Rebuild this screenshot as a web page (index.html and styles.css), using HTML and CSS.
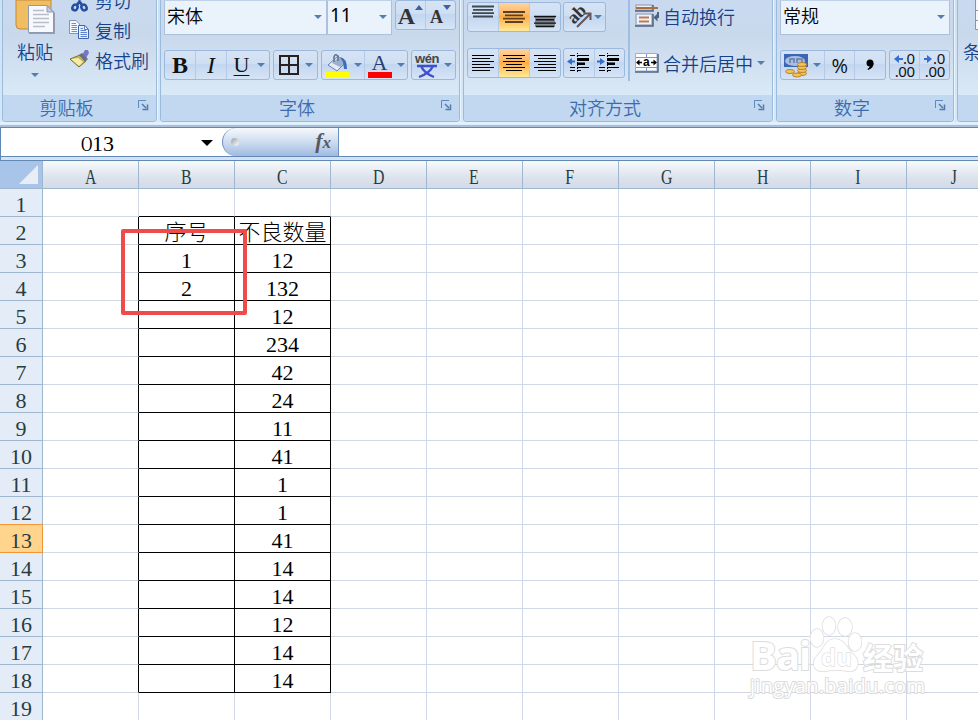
FILE: index.html
```
<!DOCTYPE html>
<html lang="zh-CN">
<head>
    <meta charset="UTF-8">
    <title>Excel</title>
    <link rel="stylesheet" href="styles.css">
</head>
<body>

<div class="ribbon">
    <div class="group clipboard">
        <div class="group-body">
            <div class="paste">
                <svg class="paste-icon" width="42" height="36" viewBox="0 0 42 36">
                    <path d="M0 0H35V25Q35 29 31 29H4Q0 29 0 25Z" fill="#f1bd61" stroke="#c38a3b"/>
                    <path d="M13 6H32L39 13V34H13Z" fill="#969dad"/>
                    <path d="M12.500 5.500H31L37.500 12V32.500H12.500Z" fill="#f7f9fe" stroke="#8e9ab0"/>
                    <path d="M31 5.500V12H37.500Z" fill="#c6cedd" stroke="#8e9ab0"/>
                    <path d="M17 10.500H28M17 14.500H33M17 18.500H33M17 22.500H33M17 26.500H29" stroke="#b9bfc9" stroke-width="1.500"/>
                </svg>
                <span>粘贴</span>
                <i class="arrow"></i>
            </div>
            <div class="commands">
                <div class="command">
                    <svg width="22" height="24" viewBox="0 0 22 24">
                        <path d="M7 8L13 16M14 8L8 16" stroke="#6c85b8" stroke-width="2"/>
                        <g fill="none" stroke="#234f9f" stroke-width="2.500"><ellipse cx="6" cy="19.500" rx="2.500" ry="3" transform="rotate(25 6 19.500)"/><ellipse cx="15" cy="19.500" rx="2.500" ry="3" transform="rotate(-25 15 19.500)"/><path d="M8 17L10.500 14L13 17"/></g>
                    </svg>剪切
                </div>
                <div class="command">
                    <svg width="22" height="24" viewBox="0 0 22 24">
                        <path d="M.5 2.500H7L10.500 6V15.500H.5Z" fill="#f4f8ff" stroke="#8095bb"/>
                        <path d="M2.500 5.500H7M2.500 7.500H8M2.500 9.500H8M2.500 11.500H8M2.500 13.500H8" stroke="#6f8fcc"/>
                        <path d="M9.500 7.500H16L19.500 11.500V20.500H9.500Z" fill="#e6efff" stroke="#4164ac"/>
                        <path d="M15.500 7.500V11.500H19.500M11.500 10.500H14M11.500 12.500H17M11.500 14.500H18M11.500 16.500H18M11.500 18.500H18" stroke="#5f83cf" fill="none"/>
                    </svg>复制
                </div>
                <div class="command">
                    <svg width="22" height="24" viewBox="0 0 22 24">
                        <path d="M13 7L16 2L19 2L20 5L17 10Z" fill="#7b74cf"/>
                        <path d="M1 11L11 7L17 13L10 19Z" fill="#c5b553" stroke="#77733a"/>
                        <path d="M2 11L9 10L14 14L10 18Z" fill="#f4edaa"/>
                        <path d="M10 7L13 5L19 11L16 14Z" fill="#68717e"/>
                    </svg>格式刷
                </div>
            </div>
        </div>
        <div class="group-title">剪贴板<svg class="launcher" width="11" height="11"><path d="M.5 8V.5H8" fill="none" stroke="#5d89bd"/><path d="M4 4L8 8M9.500 4.500V9.500H4.500" fill="none" stroke="#5479a8" stroke-width="1.500"/></svg></div>
    </div>

    <div class="group font">
        <div class="group-body">
            <div class="row top">
                <div class="combo name">宋体<i class="arrow"></i></div>
                <div class="combo size">11<i class="arrow"></i></div>
                <div class="buttons grow-shrink">
                    <span class="button"><b class="big-a">A</b><svg width="8" height="5"><path d="M0 5L4 0L8 5Z" fill="#3f629f"/></svg></span>
                    <span class="button"><b class="small-a">A</b><svg width="8" height="5"><path d="M0 0H8L4 5Z" fill="#3f629f"/></svg></span>
                </div>
            </div>
            <div class="row bottom">
                <div class="buttons bui">
                    <span class="button"><b>B</b></span>
                    <span class="button"><em>I</em></span>
                    <span class="button"><u>U</u><i class="arrow"></i></span>
                </div>
                <div class="buttons border-pick">
                    <span class="button"><svg width="22" height="22"><path d="M2 2H20V20H2ZM11 2V20M2 11H20" fill="none" stroke="#2b2020" stroke-width="2"/></svg><i class="arrow"></i></span>
                </div>
                <div class="buttons colors">
                    <span class="button"><svg width="24" height="26" viewBox="0 0 24 26">
                        <path d="M3 13L13 4L20 11L12 19Z" fill="#e3eaf6" stroke="#6a82a8"/>
                        <path d="M7 11L15 15L20 11L14 5Z" fill="#9ab0d0"/>
                        <path d="M9 10V5Q10 1 13 4V9" fill="none" stroke="#5e6f8d" stroke-width="1.500"/>
                        <path d="M15 5Q22 6 22 17L19 17L18 10Z" fill="#3e6cb8"/>
                        <path d="M0 20H24V26H0Z" fill="#ff0"/>
                    </svg><i class="arrow"></i></span>
                    <span class="button"><span class="color-a">A</span><i class="arrow"></i></span>
                </div>
                <div class="buttons phonetic">
                    <span class="button"><span class="wen"><small>wén</small><svg width="22" height="14"><path d="M1 2H21M5 2Q8 9 18 13M17 2Q14 9 3 13" stroke="#3f50ca" stroke-width="2.300" fill="none"/></svg></span><i class="arrow"></i></span>
                </div>
            </div>
        </div>
        <div class="group-title">字体<svg class="launcher" width="11" height="11"><path d="M.5 8V.5H8" fill="none" stroke="#5d89bd"/><path d="M4 4L8 8M9.500 4.500V9.500H4.500" fill="none" stroke="#5479a8" stroke-width="1.500"/></svg></div>
    </div>

    <div class="group align">
        <div class="group-body">
            <div class="align-left">
                <div class="row">
                    <div class="buttons thirds">
                        <span class="button"><svg width="24" height="24"><path d="M1 1.500H23M2 4.800H22M1 8.100H23M2 11.500H22" stroke="#3d4850" stroke-width="1.800"/></svg></span>
                        <span class="button on"><svg width="24" height="24"><path d="M1 7H23M3 10.300H21M1 13.600H23M3 17H21" stroke="#5c4020" stroke-width="1.800"/></svg></span>
                        <span class="button"><svg width="24" height="24"><path d="M2 11H22V22H2Z" fill="#828a95"/><path d="M1 11.500H23M3 14.800H21M1 18.100H23M3 21.500H21" stroke="#111" stroke-width="1.400"/></svg></span>
                    </div>
                    <div class="buttons rotate">
                        <span class="button"><svg width="26" height="24"><text x="1" y="16" transform="rotate(-45 8 12)" class="ab">ab</text><path d="M9 22L22 9M16 8.500H22.500V15" fill="none" stroke="#66545b" stroke-width="2"/></svg><i class="arrow"></i></span>
                    </div>
                </div>
                <div class="row">
                    <div class="buttons thirds">
                        <span class="button"><svg width="24" height="20"><path d="M1 2.500H23M1 5.500H19M1 8.500H23M1 11.500H19M1 14.500H23M1 17.500H19" stroke="#000"/></svg></span>
                        <span class="button on"><svg width="24" height="20"><path d="M1 2.500H23M4 5.500H20M1 8.500H23M4 11.500H20M1 14.500H23M4 17.500H20" stroke="#000"/></svg></span>
                        <span class="button"><svg width="24" height="20"><path d="M1 2.500H23M5 5.500H23M1 8.500H23M5 11.500H23M1 14.500H23M5 17.500H23" stroke="#000"/></svg></span>
                    </div>
                    <div class="buttons indent">
                        <span class="button"><svg width="24" height="22"><path d="M3 3.500H8M10 3.500H22M3 15.500H8M10 15.500H22M3 18.500H8M10 18.500H14" stroke="#000"/><path d="M10.500 1V21" stroke="#000" stroke-dasharray="1 2"/><path d="M10 6H22V9H10ZM10 10.500H18V13H10Z"/><path d="M0 9.500L5 6V8.500H8V10.500H5V13Z" fill="#356bc9"/></svg></span>
                        <span class="button"><svg width="24" height="22"><path d="M2 3.500H8M10 3.500H22M2 15.500H8M10 15.500H22M2 18.500H8M10 18.500H14" stroke="#000"/><path d="M10.500 1V21" stroke="#000" stroke-dasharray="1 2"/><path d="M10 6H22V9H10ZM10 10.500H18V13H10Z"/><path d="M8 9.500L3 6V8.500H0V10.500H3V13Z" fill="#356bc9"/></svg></span>
                    </div>
                </div>
            </div>
            <div class="align-right">
                <div class="command"><svg width="24" height="24">
                    <path d="M1 1H17V6H1ZM1 10H17V21H1Z" fill="#eef2f9" stroke="#a3afc3" stroke-width="1.500"/>
                    <path d="M0 7H18V1M0 22H18V10" fill="none" stroke="#4f6180" stroke-width="1.500"/>
                    <path d="M1 4H23" stroke="#b06c3c" stroke-width="2"/><path d="M4 13.500H14M4 17.500H14" stroke="#c07b52" stroke-width="2"/>
                    <path d="M23 8V13H21" fill="none" stroke="#52617e" stroke-width="2"/><path d="M18.500 13.500L22.500 9.500V17.500Z" fill="#52617e"/>
                </svg>自动换行</div>
                <div class="command"><svg width="24" height="22">
                    <path d="M.5 1.500H22V19H.5Z" fill="#fff" stroke="#9cb0cf"/><path d="M1 5.500H22M1 15.500H22M11.500 2V6M11.500 15V19" stroke="#8098bd"/><path d="M0 20H23V2" fill="none" stroke="#506685" stroke-width="1.500"/>
                    <path d="M3 10.500H7M16 10.500H20" stroke="#000" stroke-width="1.500"/><path d="M1 10.500L4.500 7.500V13.500ZM22 10.500L18.500 7.500V13.500Z"/><text x="8" y="14" class="merge-a">a</text>
                </svg>合并后居中<i class="arrow"></i></div>
            </div>
        </div>
        <div class="group-title">对齐方式<svg class="launcher" width="11" height="11"><path d="M.5 8V.5H8" fill="none" stroke="#5d89bd"/><path d="M4 4L8 8M9.500 4.500V9.500H4.500" fill="none" stroke="#5479a8" stroke-width="1.500"/></svg></div>
    </div>

    <div class="group number">
        <div class="group-body">
            <div class="row top">
                <div class="combo format">常规<i class="arrow"></i></div>
            </div>
            <div class="row bottom">
                <div class="buttons currency">
                    <span class="button"><svg width="24" height="26">
                        <path d="M0 2H24V15H0Z" fill="#3d65b2"/><ellipse cx="11" cy="9" rx="10" ry="5" fill="#a9bfdf"/><path d="M6 11V7H10V11M13 11V7H18V11" fill="none" stroke="#607fac" stroke-width="1.500"/>
                        <g fill="#f3c455" stroke="#b98332"><ellipse cx="18" cy="21.500" rx="4.500" ry="2"/><ellipse cx="18" cy="18.500" rx="4.500" ry="2"/><ellipse cx="18" cy="15.500" rx="4.500" ry="2"/><ellipse cx="18" cy="12.500" rx="4.500" ry="2"/><ellipse cx="6" cy="19.500" rx="4.500" ry="2"/><ellipse cx="13" cy="23" rx="4.500" ry="2"/></g>
                    </svg><i class="arrow"></i></span>
                    <span class="button percent">%</span>
                    <span class="button"><svg width="12" height="14"><circle cx="6" cy="5" r="3.500"/><path d="M9.500 5Q10 10 4 12L3.500 11Q6.500 9 6 6Z"/></svg></span>
                </div>
                <div class="buttons decimals">
                    <span class="button"><span class="dec"><span><svg width="9" height="8"><path d="M0 4L5 0V3H9V5H5V8Z" fill="#346ed2"/></svg>.0</span><span>.00</span></span></span>
                    <span class="button"><span class="dec"><span><svg width="9" height="8"><path d="M8 4L3 0V3H0V5H3V8Z" fill="#346ed2"/></svg>.0</span><span>.00</span></span></span>
                </div>
            </div>
        </div>
        <div class="group-title">数字<svg class="launcher" width="11" height="11"><path d="M.5 8V.5H8" fill="none" stroke="#5d89bd"/><path d="M4 4L8 8M9.500 4.500V9.500H4.500" fill="none" stroke="#5479a8" stroke-width="1.500"/></svg></div>
    </div>

    <div class="group styles">
        <div class="group-body">
            <svg width="30" height="30"><path d="M1 0H30V10H1ZM1 11H30V20H1ZM1 21H30V29H1Z" fill="#f5f7fb"/><path d="M.5 0V29.500H30M0 10.500H30M0 20.500H30" fill="none" stroke="#8994a7"/></svg>
            <span>条</span>
        </div>
        <div class="group-title"></div>
    </div>
</div>

<div class="formula-bar">
    <div class="name-box"><span><span class="narrow">O</span>13</span><i class="name-arrow"></i></div>
    <div class="fx"><i class="dot"></i><span>f<small>x</small></span></div>
    <div class="formula"></div>
</div>

<div class="sheet">
    <table>
        <thead><tr id="columns"><th class="corner"><svg width="19" height="20"><path d="M19 0V19H0Z" fill="#e9eef6"/></svg></th></tr></thead>
        <tbody id="cells"></tbody>
    </table>
    <div class="mark"></div>
    <div class="watermark">
        <div class="brand">
            <span class="bai">Bai</span>
            <svg width="54" height="58">
                <g fill="#fff" stroke="#dcdcdc" stroke-width="1.500">
                    <ellipse cx="8" cy="23" rx="6.500" ry="9"/><ellipse cx="20" cy="11" rx="6.500" ry="9"/><ellipse cx="36" cy="12" rx="7" ry="9"/><ellipse cx="46" cy="27" rx="6.500" ry="9"/>
                    <path d="M26 24C36 24 38 34 45 40C53 49 47 58 38 56Q26 54 17 56C6 58 1 49 8 41C15 35 16 24 26 24Z"/>
                </g>
                <text x="12" y="51" class="du">du</text>
            </svg>
            <span class="jy">经验</span>
        </div>
        <div class="url">jingyan.baidu.com</div>
    </div>
</div>

<script src="script.js"></script>
</body>
</html>
```
FILE: styles.css
```
* { box-sizing: border-box; }
body {
    margin: 0;
    width: 978px;
    height: 720px;
    overflow: hidden;
    background: #fff;
    font-family: "Noto Sans CJK SC", sans-serif;
    font-weight: 350;
}
svg { display: block; flex: none; overflow: visible; }

/* ribbon */
.ribbon {
    display: flex;
    gap: 3px;
    height: 127px;
    padding: 0 0 5px 2px;
    background: linear-gradient(#cfe0f3 0, #d5e8f8 122px, #edf6fd 123px, #d6e7f6 125px, #a9bfdb 125px);
    color: #15428b;
    font-size: 18px;
}
.group {
    flex: none;
    height: 122px;
    border: 1px solid #9abbdc;
    border-top: 0;
    border-radius: 0 0 4px 4px;
    box-shadow: 1px 0 0 #eaf4fd;
    background: linear-gradient(#c9daf0 0, #c9d9ec 35px, #dae9f6 95px);
}
.clipboard { width: 155px; }
.font { width: 300px; }
.align { width: 310px; }
.number { width: 178px; }
.styles { width: 60px; }
.group-body {
    height: 95px;
    padding: 0 3px;
    overflow: hidden;
}
.group-title {
    position: relative;
    height: 26px;
    padding-right: 26px;
    border-radius: 0 0 3px 3px;
    background: #c1d8f0;
    color: #3e6aaa;
    text-align: center;
    line-height: 25px;
}
.launcher { position: absolute; right: 7px; top: 5px; }
.arrow {
    flex: none;
    width: 0;
    height: 0;
    border: 4px solid transparent;
    border-top-color: #567db1;
    border-bottom: 0;
}

.clipboard .group-body { display: flex; }
.paste {
    display: flex;
    flex-direction: column;
    align-items: center;
    width: 58px;
    line-height: 30px;
}
.paste-icon { margin-left: 3px; }
.paste .arrow { margin-top: 7px; }
.commands { margin: -15px 0 0 5px; }
.command {
    display: flex;
    align-items: center;
    height: 30px;
    gap: 4px;
    white-space: nowrap;
}

.row { display: flex; gap: 3px; }
.row.bottom { margin-top: 15px; }
.combo {
    display: flex;
    align-items: center;
    justify-content: space-between;
    height: 35px;
    padding: 0 4px 6px 2px;
    border: 1px solid #abc1de;
    border-top-color: #c0d0e6;
    background: #eaf2fb;
    color: #000;
}
.combo .arrow { margin-top: 5px; }
.combo.name { width: 163px; margin-right: -3px; }
.combo.size { width: 65px; font-family: "Noto Sans", sans-serif; font-weight: 400; font-size: 19px; }
.combo.format { width: 170px; }
.buttons {
    display: flex;
    height: 30px;
    border: 1px solid #9bb8de;
    border-radius: 3px;
    background: linear-gradient(#d6e3f4 0, #cfdff3 45%, #c3d6ef 46%, #d5e4f6 100%);
    color: #111;
}
.button {
    display: flex;
    flex: 1;
    align-items: center;
    justify-content: center;
    gap: 5px;
    border-left: 1px solid #b4cae6;
}
.button:first-child { border-left: 0; }
.button.on { background: linear-gradient(#ffd39e 0, #ffb862 40%, #ffad45 48%, #ffea97 100%); }

.grow-shrink { width: 61px; font-family: "Liberation Serif", serif; color: #333; }
.grow-shrink b { font-weight: 700; }
.grow-shrink .button { gap: 0; }
.grow-shrink svg { margin-top: -16px; }
.big-a { font-size: 24px; line-height: 28px; margin-top: 1px; }
.small-a { font-size: 18px; line-height: 24px; margin-top: 4px; }
.bui { width: 106px; font: 24px/26px "Liberation Serif", serif; }
.bui .button { flex: 0 0 31px; }
.bui .button:first-child { flex-basis: 30px; }
.bui .button:last-child { flex: 1; gap: 8px; padding-left: 3px; }
.bui u { font-size: 22px; text-decoration-thickness: 1px; text-underline-offset: 3px; }
.border-pick { width: 45px; }
.colors { width: 87px; }
.color-a {
    width: 24px;
    height: 26px;
    border-bottom: 6px solid #f00;
    font: 22px/22px "Liberation Serif", serif;
    color: #263e70;
    text-align: center;
}
.phonetic { width: 45px; }
.wen { display: flex; flex-direction: column; align-items: center; }
.wen small { font: bold 13px/11px "Liberation Sans", sans-serif; color: #454545; letter-spacing: -.5px; }

.align .group-body { display: flex; }
.align .row { gap: 2px; }
.align-left { display: flex; flex-direction: column; gap: 16px; padding-top: 2px; }
.thirds { width: 94px; }
.rotate { width: 43px; }
.rotate .button { gap: 0; }
.ab { font: bold 18px "Liberation Serif", serif; fill: #333; }
.indent { width: 62px; }
.align-right {
    height: 81px;
    margin-left: 3px;
    padding-left: 5px;
    border-left: 2px solid #9ebee5;
}
.align-right .command { height: 32px; }
.align-right .command + .command { margin-top: 15px; }
.merge-a { font: bold 12px "Liberation Sans", sans-serif; }

.currency { width: 107px; }
.currency .button:first-child { flex: 0 0 43px; }
.percent { font: 20px "Open Sans", sans-serif; }
.decimals { width: 62px; }
.dec { display: flex; flex-direction: column; align-items: flex-end; font: 15px/13px "Noto Sans", sans-serif; }
.dec > span { display: flex; height: 13px; align-items: center; letter-spacing: -.4px; }
.styles .group-body { padding: 0 5px; }
.styles svg { margin-left: 12px; }
.styles span { display: block; margin-top: 6px; line-height: 30px; }

/* formula bar */
.formula-bar {
    display: flex;
    height: 34px;
    border: solid #6288b6;
    border-width: 1px 0 1px 1px;
    padding-bottom: 3px;
    background: linear-gradient(#fff 28px, #6288b6 28px, #6288b6 29px, #d3e3f5 29px);
}
.name-box {
    display: flex;
    align-items: center;
    justify-content: flex-end;
    width: 221px;
    height: 28px;
    padding: 4px 9px 0 0;
    background: #fff;
    font: 22px/24px "Liberation Serif", serif;
}
.name-arrow {
    margin: 0 0 3px 87px;
    border: 6px solid transparent;
    border-top-color: #000;
    border-bottom: 0;
}
.narrow { display: inline-block; width: 11px; text-indent: -2px; transform: scaleX(.72); }
.fx {
    display: flex;
    align-items: center;
    justify-content: space-between;
    width: 117px;
    height: 28px;
    padding: 0 7px 0 8px;
    border: 1px solid #6c91bf;
    border-width: 0 1px 0 1px;
    border-radius: 14px 0 0 14px;
    background: linear-gradient(#f6f9fd, #c9d9ee 55%, #9fbbe2);
    font: italic bold 22px/24px "Liberation Serif", serif;
    color: #59595f;
}
.fx small { font-size: 17px; }
.dot { width: 8px; height: 8px; border-radius: 4px; background: linear-gradient(135deg, #999fa8, #fff); }

/* sheet */
.sheet { position: relative; height: 559px; overflow: hidden; }
table {
    width: 1003px;
    border-collapse: separate;
    border-spacing: 0;
    table-layout: fixed;
    font: 22px/22px "Liberation Serif", "Noto Sans CJK SC", serif;
    font-weight: 300;
}
th, td {
    width: 96px;
    height: 28px;
    padding: 5px 0 0;
    border: solid #d0d7e5;
    border-width: 0 1px 1px 0;
    text-align: center;
    white-space: nowrap;
    font-weight: 300;
}
th {
    border-color: #9eb6ce;
    background: #e4ecf7;
    color: #273d42;
}
thead th { background: linear-gradient(#f8fafc, #dde3ed 60%, #d3dbe9); }
thead .corner { width: 43px; padding: 0 0 0 19px; background: #a9c4e9; }
.current { border-color: #f29536; background: #ffd58d; }
.before-current { border-bottom-color: #f29536; }
.boxed { border-color: #000; }
.box-top { border-bottom-color: #000; }
.box-left { border-right-color: #000; }
.mark {
    position: absolute;
    left: 121px;
    top: 68px;
    width: 126px;
    height: 86px;
    border: 4px solid #ef4b4b;
    border-radius: 2px;
}

.watermark {
    position: absolute;
    left: 750px;
    top: 454px;
    color: #fff;
    -webkit-text-stroke: 2px #dcdcdc;
    paint-order: stroke fill;
}
.brand { display: flex; align-items: flex-end; height: 58px; }
.bai { width: 59px; font: bold 40px/36px "Open Sans", sans-serif; letter-spacing: -1px; }
.du { font: bold 24px "Open Sans", sans-serif; fill: #fff; stroke: #d4d4d4; }
.jy { font-size: 30px; line-height: 34px; font-weight: 700; }
.url { font: 20px/26px "Open Sans", sans-serif; letter-spacing: .3px; }
```
FILE: script.js
```
var letters = "ABCDEFGHIJ".split("");
var counts = ["不良数量", 12, 132, 12, 234, 42, 24, 11, 41, 1, 1, 41, 14, 14, 12, 14, 14];
var serials = ["序号", 1, 2];

var addCell = function(row, tag, text, className) {
    var el = document.createElement(tag);
    el.textContent = text;
    el.className = className || "";
    row.appendChild(el);
    return el;
};

var columns = document.getElementById("columns");
letters.forEach(function(letter) {
    var th = addCell(columns, "th", "");
    addCell(th, "span", letter, "narrow");
});

var cells = document.getElementById("cells");
for(var r = 1; r <= 19; r++) {
    var row = document.createElement("tr");
    addCell(row, "th", r, r === 13 ? "current" : r === 12 ? "before-current" : "");
    var inTable = r >= 2 && r <= 18;
    letters.forEach(function(letter, c) {
        var text = "", cls = "";
        if(c === 1 || c === 2) {
            if(inTable) {
                text = (c === 1 ? serials : counts)[r - 2] || "";
                cls = "boxed";
            } else if(r === 1) {
                cls = "box-top";
            }
        } else if(c === 0 && inTable) {
            cls = "box-left";
        }
        addCell(row, "td", text, cls);
    });
    cells.appendChild(row);
}
```
